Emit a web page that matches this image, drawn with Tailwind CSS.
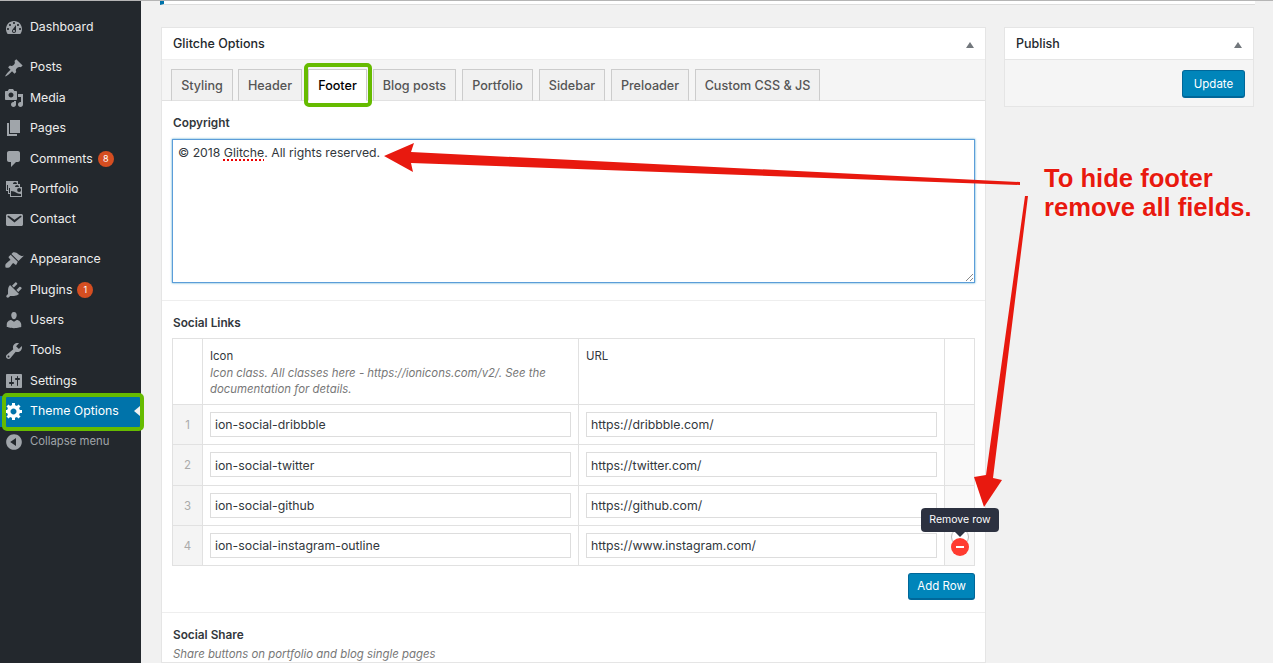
<!doctype html>
<html>
<head>
<meta charset="utf-8">
<script src="https://cdn.jsdelivr.net/npm/@tailwindcss/browser@4"></script>
</head>
<body class="m-0">
<div class="relative w-[1273px] h-[663px] overflow-hidden bg-[#f1f1f1] flex font-['Inter','Liberation_Sans',sans-serif] text-[13px] text-[#444] border-t border-[#b5b5b5]">
  <aside class="w-[141px] shrink-0 bg-[#23282d] text-[#eee] text-[12.3px] pt-[11.4px]">
    <a class="flex items-center h-[30.4px] pl-[4px]"><svg class="w-5 h-5 fill-[#a0a5aa] mr-[6px]" viewBox="0 0 20 20"><path fill-rule="evenodd" d="M3.76 16h12.48c1.1-1.37 1.76-3.11 1.76-5 0-4.42-3.58-8-8-8s-8 3.58-8 8c0 1.89.66 3.63 1.76 5zM10 4c.55 0 1 .45 1 1s-.45 1-1 1-1-.45-1-1 .45-1 1-1zM6 6c.55 0 1 .45 1 1s-.45 1-1 1-1-.45-1-1 .45-1 1-1zm8 0c.55 0 1 .45 1 1s-.45 1-1 1-1-.45-1-1 .45-1 1-1zm-5.37 5.55L12 7v6c0 1.1-.9 2-2 2s-2-.9-2-2c0-.57.24-1.08.63-1.45zM4 10c.55 0 1 .45 1 1s-.45 1-1 1-1-.45-1-1 .45-1 1-1zm12 0c.55 0 1 .45 1 1s-.45 1-1 1-1-.45-1-1 .45-1 1-1zm-5 3c0-.55-.45-1-1-1s-1 .45-1 1 .45 1 1 1 1-.45 1-1z"/></svg>Dashboard</a>
    <a class="flex items-center h-[30.4px] pl-[4px] mt-[9.6px]"><svg class="w-5 h-5 fill-[#a0a5aa] mr-[6px]" viewBox="0 0 20 20"><path d="M10.44 3.02l1.82-1.82 6.36 6.35-1.83 1.82c-1.05-.68-2.48-.57-3.41.36l-.75.75c-.92.93-1.04 2.35-.35 3.41l-1.83 1.82-2.41-2.41-2.8 2.79c-.42.42-3.38 2.71-3.8 2.29s1.86-3.39 2.28-3.81l2.79-2.79L4.1 9.36l1.83-1.82c1.05.69 2.48.57 3.4-.36l.75-.75c.93-.92 1.05-2.35.36-3.41z"/></svg>Posts</a>
    <a class="flex items-center h-[30.4px] pl-[4px]"><svg class="w-5 h-5 fill-[#a0a5aa] mr-[6px]" viewBox="0 0 20 20"><path fill-rule="evenodd" d="M13 11V4c0-.55-.45-1-1-1h-1.67L9 1H5L3.67 3H2c-.55 0-1 .45-1 1v7c0 .55.45 1 1 1h10c.55 0 1-.45 1-1zM7 4.5c1.38 0 2.5 1.12 2.5 2.5S8.38 9.5 7 9.5 4.5 8.38 4.5 7 5.62 4.5 7 4.5zM14 6h5v10.5c0 1.38-1.12 2.5-2.5 2.5S14 17.88 14 16.5s1.12-2.5 2.5-2.5c.17 0 .34.02.5.05V9h-3V6zm-4 8.05V13h2v3.5c0 1.38-1.12 2.5-2.5 2.5S7 17.88 7 16.5 8.12 14 9.5 14c.17 0 .34.02.5.05z"/></svg>Media</a>
    <a class="flex items-center h-[30.4px] pl-[4px]"><svg class="w-5 h-5 fill-[#a0a5aa] mr-[6px]" viewBox="0 0 20 20"><path d="M6 15V2h10v13H6zm-1 1h8v2H3V5h2v11z"/></svg>Pages</a>
    <a class="flex items-center h-[30.4px] pl-[4px]"><svg class="w-5 h-5 fill-[#a0a5aa] mr-[6px]" viewBox="0 0 20 20"><path d="M5 2h9c1.1 0 2 .9 2 2v7c0 1.1-.9 2-2 2h-2l-5 5v-5H5c-1.1 0-2-.9-2-2V4c0-1.1.9-2 2-2z"/></svg>Comments<span class="ml-[5px] w-4 h-4 rounded-full bg-[#d54e21] text-white text-[9px] flex items-center justify-center">8</span></a>
    <a class="flex items-center h-[30.4px] pl-[4px]"><svg class="w-5 h-5 fill-[#a0a5aa] mr-[6px]" viewBox="0 0 20 20"><path fill-rule="evenodd" d="M4 15v-3H2V2h12v3h2v3h2v10H6v-3H4zm7-12c-1.1 0-2 .9-2 2h4a2 2 0 0 0-2-2zm-7 8V6H3v5h1zm7-3h4.01c0-1.1-.9-2-2-2-1.1 0-2 .9-2 2zm-5 6V9H5v5h1zm9-1a1.997 1.997 0 1 0 .01-3.99A1.997 1.997 0 0 0 15 13zm2 4v-2c-5 0-5-3-10-3v5h10z"/></svg>Portfolio</a>
    <a class="flex items-center h-[30.4px] pl-[4px]"><svg class="w-5 h-5 fill-[#a0a5aa] mr-[6px]" viewBox="0 0 20 20"><path fill-rule="evenodd" d="M3.87 4h13.25C18.37 4 19 4.59 19 5.79v8.42c0 1.19-.63 1.79-1.88 1.79H3.87c-1.25 0-1.88-.6-1.88-1.79V5.79c0-1.2.63-1.79 1.88-1.79zm6.62 8.6l6.74-5.53c.24-.2.43-.66.13-1.07-.29-.41-.82-.42-1.17-.17l-5.7 3.86L4.8 5.83c-.35-.25-.88-.24-1.17.17-.3.41-.11.87.13 1.07z"/></svg>Contact</a>
    <a class="flex items-center h-[30.4px] pl-[4px] mt-[9.6px]"><svg class="w-5 h-5 fill-[#a0a5aa] mr-[6px]" viewBox="0 0 20 20"><path d="M14.48 11.06L7.41 3.99l1.5-1.5c.5-.56 2.3-.47 3.51.32 1.21.8 1.43 1.28 2.91 2.1 1.18.64 2.45 1.26 4.45.85zm-.71.71L6.7 4.7 4.93 6.47c-.39.39-.39 1.02 0 1.41l1.06 1.06c.39.39.39 1.03 0 1.42-.6.6-1.43 1.11-2.21 1.69-.35.26-.7.53-1.01.84C1.43 13.71.96 15.12 1.54 17.4c2.28.58 3.69.11 4.52-.7.31-.31.58-.66.84-1.01.58-.78 1.09-1.61 1.69-2.21.39-.39 1.02-.39 1.41 0l1.06 1.06c.39.39 1.02.39 1.41 0z"/></svg>Appearance</a>
    <a class="flex items-center h-[30.4px] pl-[4px]"><svg class="w-5 h-5 fill-[#a0a5aa] mr-[6px]" viewBox="0 0 20 20"><path d="M13.11 4.36L9.87 7.6 8 5.73l3.24-3.24c.35-.34 1.05-.2 1.56.32.52.51.66 1.21.31 1.55zm-8 1.77l.91-1.12 9.01 9.01-1.19.84c-.71.71-2.63 1.16-3.82 1.16H6.14L4.9 17.26c-.59.59-1.54.59-2.12 0-.59-.58-.59-1.53 0-2.12l1.24-1.24v-3.88c0-1.13.4-3.19 1.09-3.89zm7.26 3.97l3.24-3.24c.34-.35 1.04-.2 1.55.31.52.52.66 1.22.32 1.57l-3.24 3.24z"/></svg>Plugins<span class="ml-[5px] w-4 h-4 rounded-full bg-[#d54e21] text-white text-[9px] flex items-center justify-center">1</span></a>
    <a class="flex items-center h-[30.4px] pl-[4px]"><svg class="w-5 h-5 fill-[#a0a5aa] mr-[6px]" viewBox="0 0 20 20"><path d="M10 9.25c-2.27 0-2.73-3.44-2.73-3.44C7 4.02 7.82 2 9.97 2c2.16 0 2.98 2.02 2.71 3.81 0 0-.41 3.44-2.68 3.44zm0 2.57L12.72 10c2.39 0 4.52 2.33 4.52 4.53v2.49s-3.65 1.13-7.24 1.13c-3.65 0-7.24-1.13-7.24-1.13v-2.49c0-2.25 1.94-4.48 4.47-4.48z"/></svg>Users</a>
    <a class="flex items-center h-[30.4px] pl-[4px]"><svg class="w-5 h-5 fill-[#a0a5aa] mr-[6px]" viewBox="0 0 20 20"><path fill-rule="evenodd" d="M16.68 9.77c-1.34 1.34-3.3 1.67-4.95.99l-5.41 6.52c-.99.99-2.59.99-3.58 0s-.99-2.59 0-3.57l6.52-5.42c-.68-1.65-.35-3.61.99-4.95 1.28-1.28 3.12-1.62 4.72-1.06l-2.89 2.89 2.82 2.82 2.86-2.87c.53 1.58.18 3.39-1.08 4.65zM3.81 16.21c.4.39 1.04.39 1.43 0 .4-.4.4-1.04 0-1.43-.39-.4-1.03-.4-1.43 0-.39.39-.39 1.03 0 1.43z"/></svg>Tools</a>
    <a class="flex items-center h-[30.4px] pl-[4px]"><svg class="w-5 h-5 fill-[#a0a5aa] mr-[6px]" viewBox="0 0 20 20"><path fill-rule="evenodd" d="M18 16V4c0-.55-.45-1-1-1H3c-.55 0-1 .45-1 1v12c0 .55.45 1 1 1h14c.55 0 1-.45 1-1zM8 11h1c.55 0 1 .45 1 1s-.45 1-1 1H8v1.5c0 .28-.22.5-.5.5s-.5-.22-.5-.5V13H6c-.55 0-1-.45-1-1s.45-1 1-1h1V5.5c0-.28.22-.5.5-.5s.5.22.5.5V11zm5-2h-1c-.55 0-1-.45-1-1s.45-1 1-1h1V5.5c0-.28.22-.5.5-.5s.5.22.5.5V7h1c.55 0 1 .45 1 1s-.45 1-1 1h-1v5.5c0 .28-.22.5-.5.5s-.5-.22-.5-.5V9z"/></svg>Settings</a>
    <a class="relative flex items-center h-[30.4px] pl-[4px] bg-[#0073aa] text-white"><svg class="w-5 h-5 fill-white mr-[6px]" viewBox="0 0 20 20"><path fill-rule="evenodd" d="M18 12h-2.18c-.17.7-.44 1.35-.81 1.93l1.54 1.54-2.1 2.1-1.54-1.54c-.58.36-1.23.63-1.91.79V19H8v-2.18c-.68-.16-1.33-.43-1.91-.79l-1.54 1.54-2.12-2.12 1.54-1.54c-.36-.58-.63-1.23-.79-1.91H1V9.03h2.17c.16-.7.44-1.35.8-1.94L2.43 5.55l2.1-2.1 1.54 1.54c.58-.37 1.24-.64 1.93-.81V2h3v2.18c.68.16 1.33.43 1.91.79l1.54-1.54 2.12 2.12-1.54 1.54c.36.59.64 1.24.8 1.94H18V12zm-8.5 1.5c1.66 0 3-1.34 3-3s-1.34-3-3-3-3 1.34-3 3 1.34 3 3 3z"/></svg>Theme Options<span class="absolute right-[1px] top-[10px] border-y-[5px] border-y-transparent border-r-[6px] border-r-[#f1f1f1]"></span></a>
    <a class="flex items-center h-[30.4px] pl-[4px] text-[#a0a5aa] text-[11.3px]"><svg class="w-5 h-5 fill-[#a0a5aa] mr-[6px]" viewBox="0 0 20 20"><path fill-rule="evenodd" d="M10 2.16c4.33 0 7.84 3.51 7.84 7.84s-3.51 7.84-7.84 7.84S2.16 14.33 2.16 10 5.71 2.16 10 2.16zm2 11.72V6.12L6.18 9.97z"/></svg>Collapse menu</a>
  </aside>

  <main class="flex-1 min-w-0 pl-[20px] pr-[19px]">
    <div class="h-[4px] w-[1095px] bg-white border-b border-[#ddd] border-l-4 border-l-[#0073aa] -ml-[1px]"></div>
    <div class="flex gap-[18px] items-start mt-[22px]">
      <section class="w-[825px] shrink-0 bg-white border border-[#e5e5e5]">
        <div class="flex items-center justify-between h-[32px] pt-[2px] px-[11px] text-[#23282d] font-medium text-[12.5px] border-b border-[#eee]">
          <span>Glitche Options</span>
          <span class="border-x-[4px] border-x-transparent border-b-[6px] border-b-[#72777c]"></span>
        </div>
        <div class="flex items-end gap-[6px] h-[41px] bg-[#f5f5f5] border-b border-[#e1e1e1] pl-[9px] text-[#555] font-medium text-[12.6px]">
          <span class="flex items-center justify-center h-[32px] pt-[2px] -mb-px w-[62px] -mr-px bg-[#f1f1f1] border border-[#ccc] border-b-[#e1e1e1]">Styling</span>
          <span class="flex items-center justify-center h-[32px] pt-[2px] -mb-px w-[64px] bg-[#f1f1f1] border border-[#ccc] border-b-[#e1e1e1]">Header</span>
          <span class="flex items-center justify-center h-[32px] pt-[2px] -mb-px w-[59px] bg-white border border-[#ccc] border-b-white text-black">Footer</span>
          <span class="flex items-center justify-center h-[32px] pt-[2px] -mb-px w-[83px] bg-[#f1f1f1] border border-[#ccc] border-b-[#e1e1e1]">Blog posts</span>
          <span class="flex items-center justify-center h-[32px] pt-[2px] -mb-px w-[71px] bg-[#f1f1f1] border border-[#ccc] border-b-[#e1e1e1]">Portfolio</span>
          <span class="flex items-center justify-center h-[32px] pt-[2px] -mb-px w-[66px] bg-[#f1f1f1] border border-[#ccc] border-b-[#e1e1e1]">Sidebar</span>
          <span class="flex items-center justify-center h-[32px] pt-[2px] -mb-px w-[78px] bg-[#f1f1f1] border border-[#ccc] border-b-[#e1e1e1]">Preloader</span>
          <span class="flex items-center justify-center h-[32px] pt-[2px] -mb-px w-[125px] bg-[#f1f1f1] border border-[#ccc] border-b-[#e1e1e1]">Custom CSS &amp; JS</span>
        </div>

        <div class="px-[10px] pt-[15px] pb-[17px] border-b border-[#eee]">
          <div class="ml-px font-semibold text-[11.8px] text-[#32373c] leading-[14px] mb-[9px]">Copyright</div>
          <div class="relative h-[144px] border border-[#5b9dd9] shadow-[0_0_2px_rgba(30,140,190,.8)] px-[5px] py-[4px] text-[12.25px] leading-[18px] text-[#32373c]">© 2018 <span class="underline decoration-dotted decoration-[#e00] decoration-2 underline-offset-2">Glitche</span>. All rights reserved.<svg class="absolute right-[1px] bottom-[1px] w-[8px] h-[8px] stroke-[#888]" viewBox="0 0 8 8"><path d="M1 8L8 1M5 8l3-3"/></svg></div>
        </div>

        <div class="px-[10px] pt-[15px] pb-[12px] border-b border-[#eee]">
          <div class="ml-px font-semibold text-[11.8px] text-[#32373c] leading-[14px] mb-[8px]">Social Links</div>
          <table class="table-fixed border-collapse w-[802px] text-[11.4px] text-[#32373c]">
            <colgroup><col class="w-[30px]"><col class="w-[376px]"><col class="w-[366px]"><col class="w-[30px]"></colgroup>
            <tr class="h-[66px]">
              <td class="border border-[#e1e1e1]"></td>
              <td class="border border-[#e1e1e1] px-[7px] pt-[9px] align-top leading-[16.5px]"><div>Icon</div><div class="italic text-[#777]">Icon class. All classes here - https://ionicons.com/v2/. See the documentation for details.</div></td>
              <td class="border border-[#e1e1e1] px-[7px] pt-[9px] align-top leading-[16.5px]">URL</td>
              <td class="border border-[#e1e1e1]"></td>
            </tr>
            <tr class="h-[40.25px]">
              <td class="border border-[#e1e1e1] bg-[#f4f4f4] text-center text-[#aaa] pt-[2px]">1</td>
              <td class="border border-[#e1e1e1] px-[7px]"><div class="h-[25px] border border-[#ddd] px-[4px] pt-[2px] flex items-center text-[12.3px]">ion-social-dribbble</div></td>
              <td class="border border-[#e1e1e1] px-[7px]"><div class="h-[25px] border border-[#ddd] px-[4px] pt-[2px] flex items-center text-[12.3px]">https://dribbble.com/</div></td>
              <td class="border border-[#e1e1e1] bg-[#f9f9f9]"></td>
            </tr>
            <tr class="h-[40.25px]">
              <td class="border border-[#e1e1e1] bg-[#f4f4f4] text-center text-[#aaa] pt-[2px]">2</td>
              <td class="border border-[#e1e1e1] px-[7px]"><div class="h-[25px] border border-[#ddd] px-[4px] pt-[2px] flex items-center text-[12.3px]">ion-social-twitter</div></td>
              <td class="border border-[#e1e1e1] px-[7px]"><div class="h-[25px] border border-[#ddd] px-[4px] pt-[2px] flex items-center text-[12.3px]">https://twitter.com/</div></td>
              <td class="border border-[#e1e1e1] bg-[#f9f9f9]"></td>
            </tr>
            <tr class="h-[40.25px]">
              <td class="border border-[#e1e1e1] bg-[#f4f4f4] text-center text-[#aaa] pt-[2px]">3</td>
              <td class="border border-[#e1e1e1] px-[7px]"><div class="h-[25px] border border-[#ddd] px-[4px] pt-[2px] flex items-center text-[12.3px]">ion-social-github</div></td>
              <td class="border border-[#e1e1e1] px-[7px]"><div class="h-[25px] border border-[#ddd] px-[4px] pt-[2px] flex items-center text-[12.3px]">https://github.com/</div></td>
              <td class="border border-[#e1e1e1] bg-[#f9f9f9]"></td>
            </tr>
            <tr class="h-[40.25px]">
              <td class="border border-[#e1e1e1] bg-[#f4f4f4] text-center text-[#aaa] pt-[2px]">4</td>
              <td class="border border-[#e1e1e1] px-[7px]"><div class="h-[25px] border border-[#ddd] px-[4px] pt-[2px] flex items-center text-[12.3px]">ion-social-instagram-outline</div></td>
              <td class="border border-[#e1e1e1] px-[7px]"><div class="h-[25px] border border-[#ddd] px-[4px] pt-[2px] flex items-center text-[12.3px]">https://www.instagram.com/</div></td>
              <td class="border border-[#e1e1e1] bg-[#f9f9f9]"></td>
            </tr>
          </table>
          <div class="flex justify-end mt-[7px]">
            <span class="flex items-center justify-center w-[67px] h-[27px] pt-[2px] bg-[#0085ba] border border-[#006799] border-b-2 rounded-[3px] text-white text-[11.5px]">Add Row</span>
          </div>
        </div>

        <div class="px-[10px] pt-[15px]">
          <div class="ml-px font-semibold text-[11.8px] text-[#32373c] leading-[14px] mb-[4px]">Social Share</div>
          <div class="ml-px italic text-[#777] text-[11.4px] leading-[16px]">Share buttons on portfolio and blog single pages</div>
        </div>
      </section>

      <section class="w-[250px] shrink-0 border border-[#e5e5e5] bg-[#f5f5f5]">
        <div class="flex items-center justify-between h-[32px] pt-[2px] px-[11px] bg-white text-[#23282d] font-medium text-[12.5px] border-b border-[#e5e5e5]">
          <span>Publish</span>
          <span class="border-x-[4px] border-x-transparent border-b-[6px] border-b-[#72777c]"></span>
        </div>
        <div class="flex justify-end pl-[9px] pr-[8px] pt-[10px] pb-[8px]">
          <span class="flex items-center justify-center w-[63px] h-[28px] pt-[2px] bg-[#0085ba] border border-[#006799] border-b-2 rounded-[3px] text-white text-[11.5px]">Update</span>
        </div>
      </section>
    </div>
  </main>

  <!-- remove-row control and tooltip -->
  <div class="absolute left-[951px] top-[527px] w-[18px] h-[18px] rounded-full bg-white border border-[#bbb]"></div>
  <div class="absolute left-[951px] top-[537px] w-[18px] h-[18px] rounded-full bg-[#ff3b30] flex items-center justify-center"><span class="block w-[8px] h-[2px] bg-white"></span></div>
  <div class="absolute left-[921px] top-[507px] w-[78px] h-[24px] rounded-[4px] bg-[#2c3140] text-white text-[10.5px] flex items-center justify-center">Remove row<span class="absolute left-[34px] top-[24px] border-x-[5px] border-x-transparent border-t-[5px] border-t-[#2c3140]"></span></div>

  <!-- green highlights -->
  <div class="absolute left-[304px] top-[62px] w-[68px] h-[44px] border-[4px] border-[#66bb00] rounded-[5px]"></div>
  <div class="absolute left-[2px] top-[392px] w-[142px] h-[38px] border-[4.5px] border-[#66bb00] rounded-[5px]"></div>

  <!-- annotation arrows -->
  <svg class="absolute left-0 top-[-1px] w-[1273px] h-[663px] pointer-events-none" viewBox="0 0 1273 663">
    <polygon fill="#e8190f" points="384,156 414,143 411,152 1020,182 1020,185 411,163 413,172"/>
    <polygon fill="#e8190f" points="1028,196 1025,196 986,475 974,477 984,507 1002,480 993,478"/>
  </svg>
  <div class="absolute left-[1044px] top-[163px] font-['Liberation_Sans',sans-serif] font-bold text-[25.6px] leading-[29px] text-[#e8190f] [text-shadow:0_0_2px_white]">To hide footer<br>remove all fields.</div>
</div>
</body>
</html>
